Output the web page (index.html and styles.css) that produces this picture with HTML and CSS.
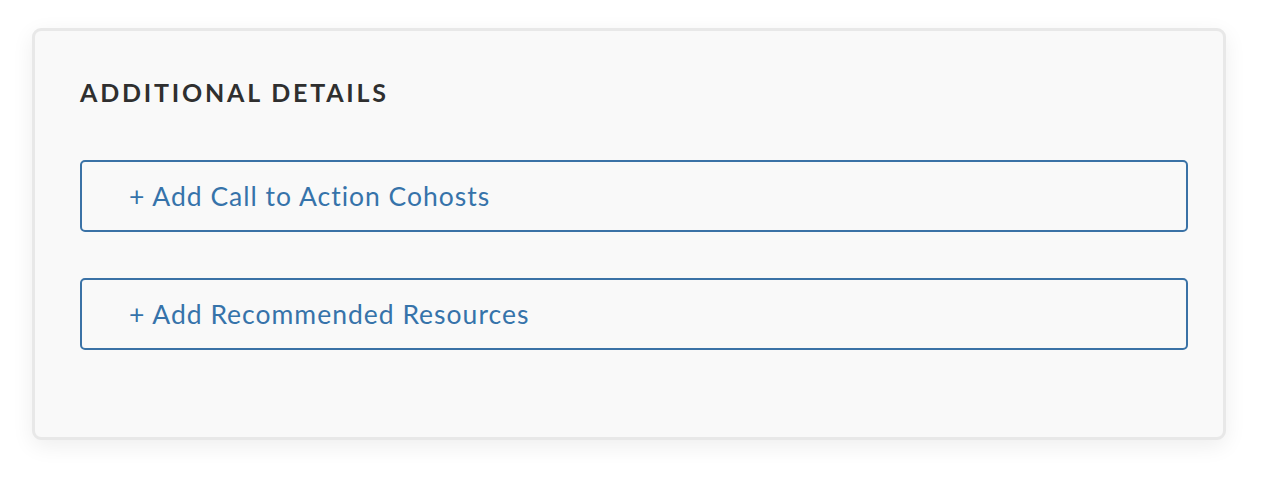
FILE: index.html
```html
<!DOCTYPE html>
<html>
<head>
  <meta charset="utf-8">
  <title>Additional Details</title>
  <link rel="stylesheet" href="styles.css">
</head>
<body>
  <div class="page">
    <section class="details-card">
      <h2 class="details-title">ADDITIONAL DETAILS</h2>
      <div class="details-actions">
        <button class="add-btn" type="button">+ Add Call to Action Cohosts</button>
        <button class="add-btn" type="button">+ Add Recommended Resources</button>
      </div>
    </section>
  </div>
</body>
</html>
```

FILE: styles.css
```css
/* ============================================================
  PAGE
============================================================ */
html, body {
  margin: 0;
  padding: 0;
  background-color: #ffffff;
}
body {
  font-family: Lato, "Open Sans", "Liberation Sans", sans-serif;
}
.page {
  padding: 28px 42px 40px 32px;
}

/* ============================================================
  CARD
============================================================ */
.details-card {
  box-sizing: border-box;
  height: 412px;
  padding: 47px 35px 0 45px;
  background-color: #f9f9f9;
  border: 3px solid #e8e8e8;
  border-radius: 9px;
  box-shadow: 0 6px 22px rgba(0, 0, 0, 0.07);
}
.details-title {
  margin: 0;
  font-size: 25px;
  font-weight: 700;
  letter-spacing: 2.8px;
  line-height: 28px;
  color: #2f2f2f;
}
.details-actions {
  display: flex;
  flex-direction: column;
  gap: 46px;
  margin-top: 54px;
}

/* ============================================================
  BUTTONS
============================================================ */
.add-btn {
  display: block;
  box-sizing: border-box;
  width: 100%;
  height: 72px;
  padding: 0 47px;
  text-align: left;
  font-family: inherit;
  font-size: 26.5px;
  letter-spacing: 1px;
  color: #3673aa;
  background-color: transparent;
  border: 2px solid #3a72a6;
  border-radius: 5px;
  cursor: pointer;
}
```
